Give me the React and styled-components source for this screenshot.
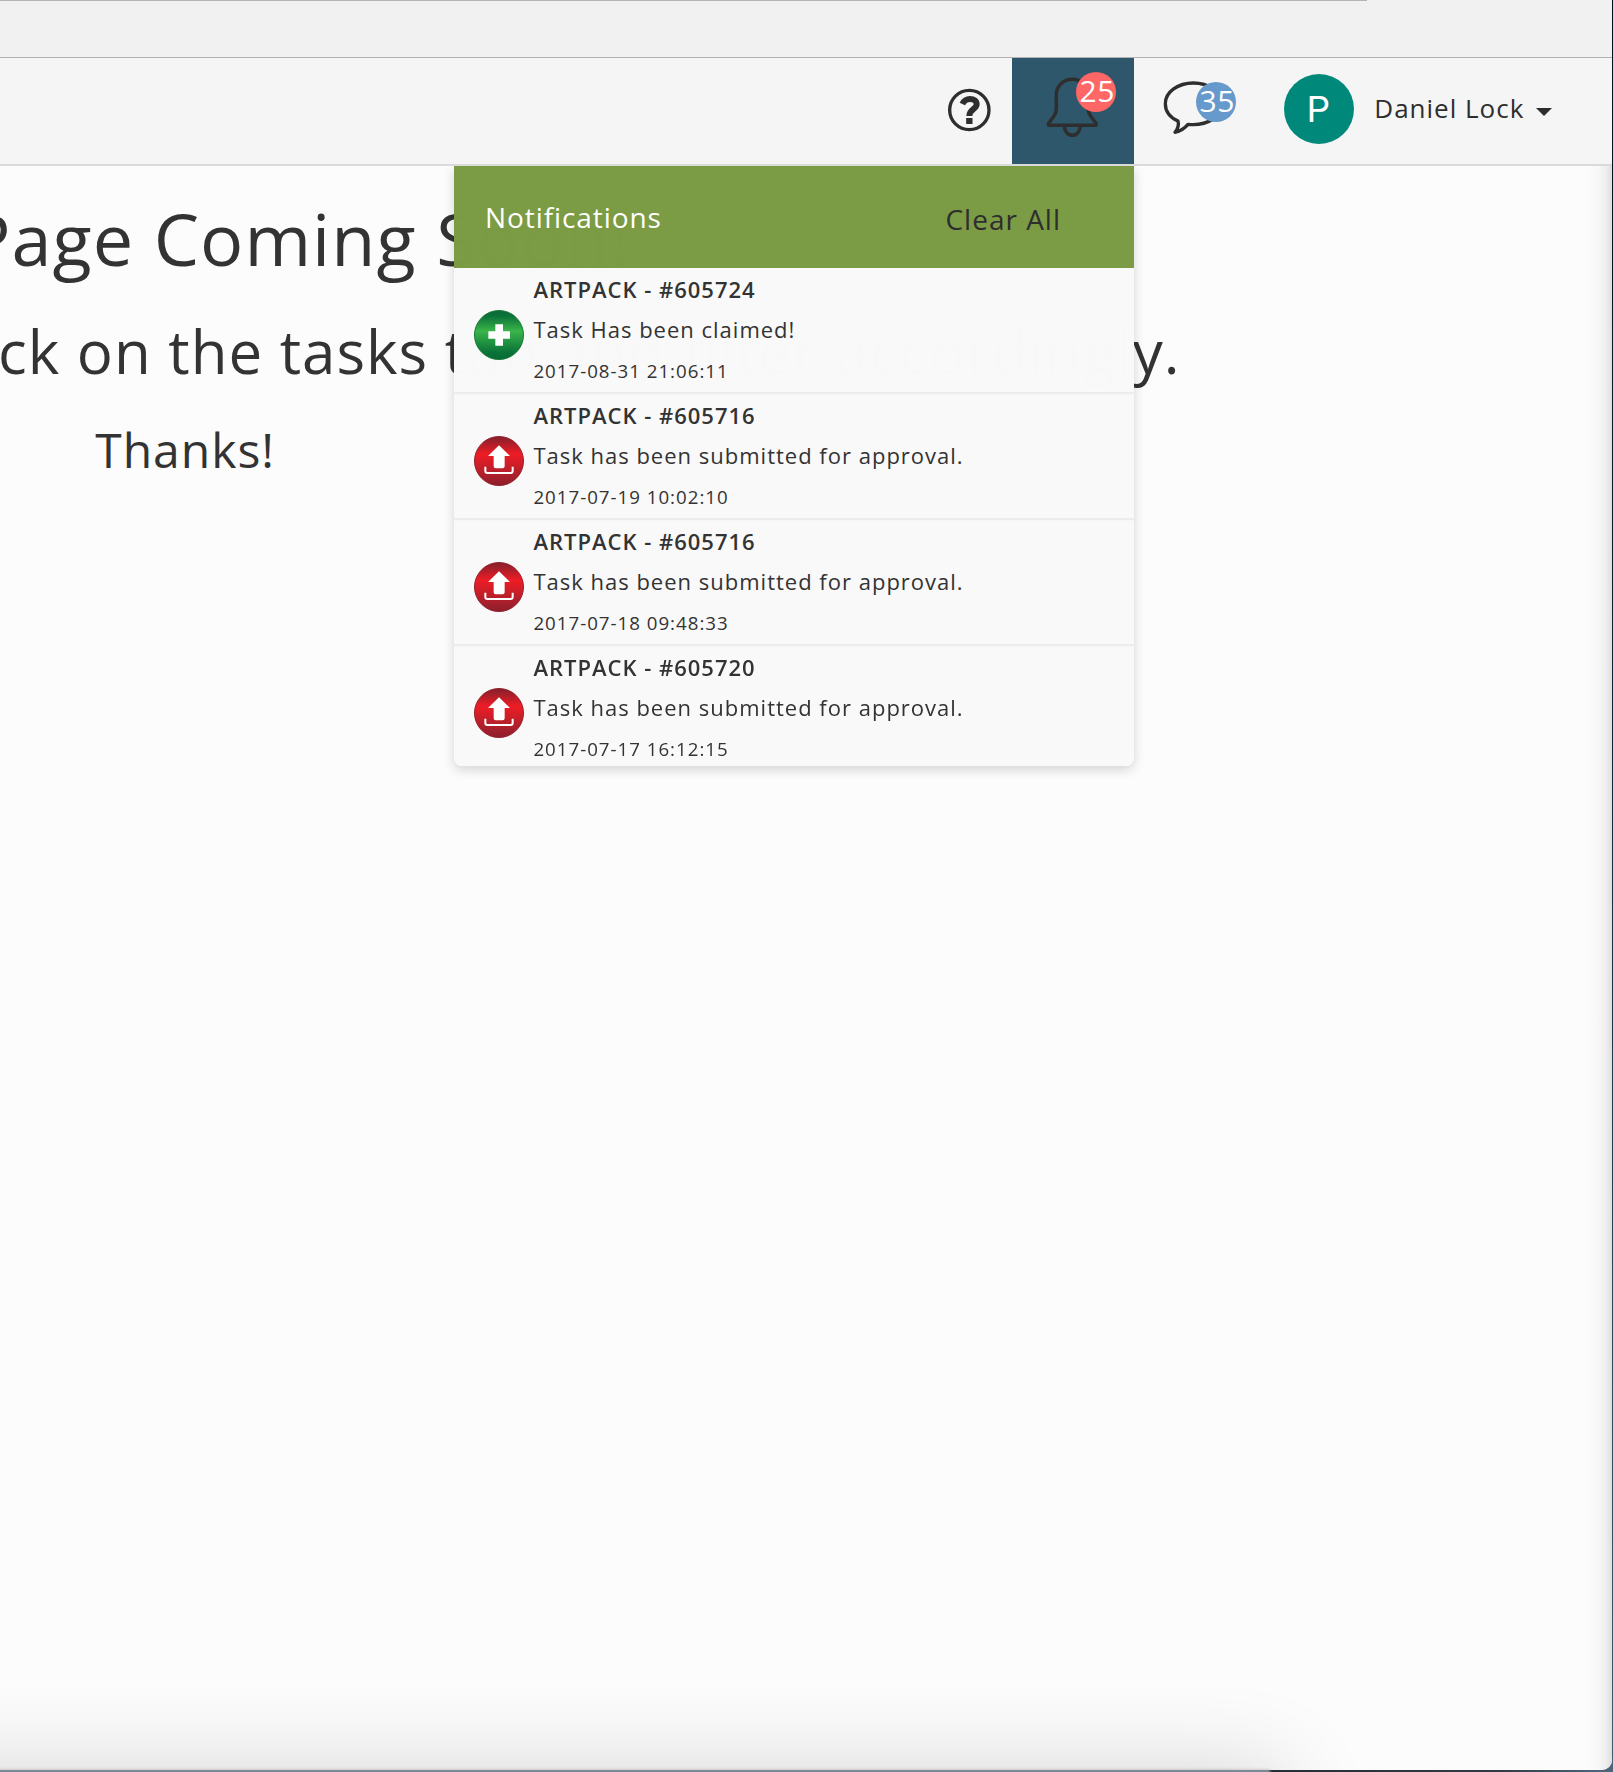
import React from "react";
import styled, { createGlobalStyle } from "styled-components";

const GlobalStyle = createGlobalStyle`
  *, *::before, *::after { box-sizing: border-box; }
  html, body { margin: 0; padding: 0; }
  body {
    font-family: "Open Sans", "Noto Sans", sans-serif;
    letter-spacing: 1px;
    color: #333;
  }
`;

const Desktop = styled.div`
  width: 1613px;
  height: 1772px;
  overflow: hidden;
  background:
    linear-gradient(to right, #7a8998 0 1268px, #252e39 1272px, #2f3b48 1500px, #4f647b 1600px) 0 100% / 1613px 14px no-repeat,
    linear-gradient(#050d24, #0b1830 30%, #2c405a 70%, #44596f);
`;

const Window = styled.div`
  position: relative;
  width: 1612px;
  height: 1770px;
  display: flex;
  flex-direction: column;
  overflow: hidden;
  border-radius: 0 0 10px 0;
  background: #fcfcfc;
`;

const BehindShadow = styled.div`
  position: absolute;
  left: -200px;
  top: 1770px;
  width: 1484px;
  height: 200px;
  pointer-events: none;
  box-shadow: 0 0 90px rgba(0, 0, 0, 0.16), -14px 0 3px rgba(60, 40, 20, 0.25);
`;

const Chrome = styled.div`
  height: 58px;
  flex: none;
  background: linear-gradient(#b4b4b4, #b4b4b4) 0 0 / 1367px 1px no-repeat, #f1f1f1;
  border-bottom: 1px solid #b1b1b1;
`;

const Header = styled.header`
  position: relative;
  display: flex;
  justify-content: flex-end;
  flex: none;
  height: 108px;
  background: #f5f5f5;
  border-bottom: 2px solid #dadada;
`;

const IconButton = styled.div`
  position: relative;
  width: ${(p) => p.$width}px;
  padding: ${(p) => p.$pad};
  background: ${(p) => (p.$active ? "#2e576b" : "transparent")};

  svg { display: block; }
`;

const Badge = styled.span`
  position: absolute;
  left: ${(p) => p.$left}px;
  top: ${(p) => p.$top}px;
  width: 40px;
  height: 40px;
  border-radius: 50%;
  background: ${(p) => p.$color};
  color: #fff;
  font-size: 30px;
  letter-spacing: 0.6px;
  line-height: 38px;
  padding-left: 3.5px;
  white-space: nowrap;
`;

const User = styled.div`
  display: flex;
  align-items: flex-start;
  width: 328px;
  padding-top: 16px;
`;

const Avatar = styled.div`
  display: flex;
  align-items: center;
  justify-content: center;
  width: 70px;
  height: 70px;
  padding: 3px 2px 0 0;
  border-radius: 50%;
  background: #00897b;
  color: #fff;
  font: 400 36px/67px Roboto, sans-serif;
  letter-spacing: 0;
`;

const UserName = styled.span`
  margin-left: 20.3px;
  font-size: 26px;
  line-height: 68px;
  color: #2e2e2e;
`;

const Caret = styled.span`
  margin: 34px 0 0 11.2px;
  border: 8px solid transparent;
  border-top-color: #2e2e2e;
  border-bottom: 0;
`;

const Dropdown = styled.section`
  position: absolute;
  z-index: 2;
  right: 478px;
  top: 108px;
  width: 680px;
  height: 600px;
  overflow: hidden;
  border-radius: 0 0 8px 8px;
  background: #f9f9f9;
  opacity: 0.997;
`;

const DropdownShadow = styled.div`
  position: absolute;
  z-index: 1;
  right: 478px;
  top: 108px;
  width: 680px;
  height: 600px;
  border-radius: 0 0 8px 8px;
  box-shadow: 0 4px 12px rgba(0, 0, 0, 0.16);
  clip-path: inset(0 -30px -30px -30px);
`;

const DropdownHeader = styled.div`
  display: flex;
  align-items: center;
  justify-content: space-between;
  height: 102px;
  padding: 0 73px 0 31px;
  background: #7b9b44;
  font-size: 28px;
  line-height: 40px;
`;

const DropdownTitle = styled.span`
  color: #fff;
  letter-spacing: 0.92px;
`;

const ClearAll = styled.span`
  padding-top: 4px;
  color: #2e2e2e;
`;

const Row = styled.div`
  display: flex;
  gap: 9.4px;
  height: 126px;
  padding: 1px 0 0 20px;
  border-bottom: 2px solid #ececec;

  & + & { box-shadow: inset 0 2px 0 #f7f7f7; }
`;

const StatusIcon = styled.svg`
  flex: none;
  width: 50px;
  height: 50px;
  margin-top: 41px;
`;

const RowBody = styled.div`
  white-space: nowrap;
`;

const RowTitle = styled.div`
  font-size: 22px;
  font-weight: 600;
  line-height: 40px;
`;

const RowText = styled.div`
  font-size: 22px;
  line-height: 41px;
`;

const RowDate = styled.div`
  font-size: 18.7px;
  line-height: 41px;
`;

const Content = styled.main`
  display: flex;
  flex-direction: column;
  gap: 40px;
  flex: 1;
  padding-top: 32px;
  background: linear-gradient(to left, #dedede, #eeeeee 6px, #f8f8f8 14px, #fcfcfc 26px);
`;

const Line = styled.div`
  display: flex;
  justify-content: flex-end;
  width: ${(p) => p.$end}px;
  font-size: ${(p) => p.$size}px;
  line-height: ${(p) => p.$leading}px;
  white-space: nowrap;
`;

const HelpIcon = () => (
  <svg width="44.67" height="44.67" viewBox="82 144 134 134" fill="none" stroke="#2e2e2e">
    <circle cx="149" cy="210" r="59" strokeWidth="10" />
    <path d="M128 192C133 182 141 177 151 177C163 177 171 183 171 193C171 208 149 208 149 228" strokeWidth="18" />
    <rect x="139.500" y="234" width="19" height="18" fill="#2e2e2e" stroke="none" />
  </svg>
);

const BellIcon = () => (
  <svg width="52.67" height="61.33" viewBox="378 112 158 184" fill="none" stroke="#2e2e2e" strokeWidth="10.500" strokeLinejoin="round">
    <path d="M387 257C384 257 385 253 386 251C400 231 409 224 409 204V165C409 139 430 119 456.500 119C483 119 504 139 504 165V204C504 224 514 231 528 251C529 253 530 257 527 257Z" />
    <path d="M433 259A24 28 0 0 0 481 259" />
  </svg>
);

const ChatIcon = () => (
  <svg width="61.33" height="54.67" viewBox="728 120 184 164" fill="none" stroke="#2e2e2e" strokeWidth="10" strokeLinejoin="round">
    <path d="M803 253C864 259 903 229 903 191C903 156 865 129 819 129C773 129 735 156 735 191C735 213 749 232 773 243C776 254 772 267 764 277C781 273 793 265 803 253Z" />
  </svg>
);

const ClaimedIcon = () => (
  <StatusIcon viewBox="0 0 150 150">
    <defs>
      <linearGradient id="green" x1="0" y1="0" x2="0" y2="1">
        <stop offset="0" stopColor="#076a36" />
        <stop offset="0.12" stopColor="#0c7339" />
        <stop offset="0.42" stopColor="#3ab54a" />
        <stop offset="0.85" stopColor="#0b7439" />
        <stop offset="1" stopColor="#076a36" />
      </linearGradient>
    </defs>
    <circle cx="75" cy="75" r="73.500" fill="url(#green)" stroke="#1b7a34" strokeWidth="3" />
    <path d="M64 43h23v21h21v22H87v21H64V86H43V64h21z" fill="#fff" />
  </StatusIcon>
);

const SubmittedIcon = () => (
  <StatusIcon viewBox="0 0 150 150">
    <defs>
      <linearGradient id="red" x1="0" y1="0" x2="0" y2="1">
        <stop offset="0" stopColor="#83202a" />
        <stop offset="0.1" stopColor="#a01f2a" />
        <stop offset="0.36" stopColor="#ee1c25" />
        <stop offset="0.85" stopColor="#a3202c" />
        <stop offset="1" stopColor="#8a1e2a" />
      </linearGradient>
    </defs>
    <circle cx="75" cy="75" r="73.500" fill="url(#red)" stroke="#96202b" strokeWidth="3" />
    <path d="M75 28L108 60H92V91Q92 97 86 97H65Q59 97 59 91V60H42Z" fill="#fff" />
    <path d="M34 92V105Q34 111 40 111H110Q116 111 116 105V92" fill="none" stroke="#fff" strokeWidth="6" />
  </StatusIcon>
);

const notifications = [
  { id: 1, icon: ClaimedIcon, title: "ARTPACK - #605724", text: "Task Has been claimed!", date: "2017-08-31 21:06:11" },
  { id: 2, icon: SubmittedIcon, title: "ARTPACK - #605716", text: "Task has been submitted for approval.", date: "2017-07-19 10:02:10" },
  { id: 3, icon: SubmittedIcon, title: "ARTPACK - #605716", text: "Task has been submitted for approval.", date: "2017-07-18 09:48:33" },
  { id: 4, icon: SubmittedIcon, title: "ARTPACK - #605720", text: "Task has been submitted for approval.", date: "2017-07-17 16:12:15" },
];

export default function App() {
  return (
    <>
      <GlobalStyle />
      <Desktop>
        <Window>
          <Chrome />
          <Header>
            <IconButton $width={92} $pad="30px 0 0 27.4px">
              <HelpIcon />
            </IconButton>
            <IconButton $width={122} $pad="19.3px 0 0 34px" $active>
              <BellIcon />
              <Badge $left={64} $top={14} $color="#ff6666">25</Badge>
            </IconButton>
            <IconButton $width={150} $pad="22px 0 0 28.7px">
              <ChatIcon />
              <Badge $left={62} $top={24} $color="#6699cc">35</Badge>
            </IconButton>
            <User>
              <Avatar>P</Avatar>
              <UserName>Daniel Lock</UserName>
              <Caret />
            </User>
            <DropdownShadow />
            <Dropdown>
              <DropdownHeader>
                <DropdownTitle>Notifications</DropdownTitle>
                <ClearAll>Clear All</ClearAll>
              </DropdownHeader>
              {notifications.map(({ id, icon: Icon, title, text, date }) => (
                <Row key={id}>
                  <Icon />
                  <RowBody>
                    <RowTitle>{title}</RowTitle>
                    <RowText>{text}</RowText>
                    <RowDate>{date}</RowDate>
                  </RowBody>
                </Row>
              ))}
            </Dropdown>
          </Header>
          <Content>
            <Line $end={630.5} $size={72} $leading={80}>Page Coming Soon!</Line>
            <Line $end={1180.5} $size={60} $leading={66}>click on the tasks tab and filter accordingly.</Line>
            <Line $end={275} $size={48} $leading={52}>Thanks!</Line>
          </Content>
          <BehindShadow />
        </Window>
      </Desktop>
    </>
  );
}
